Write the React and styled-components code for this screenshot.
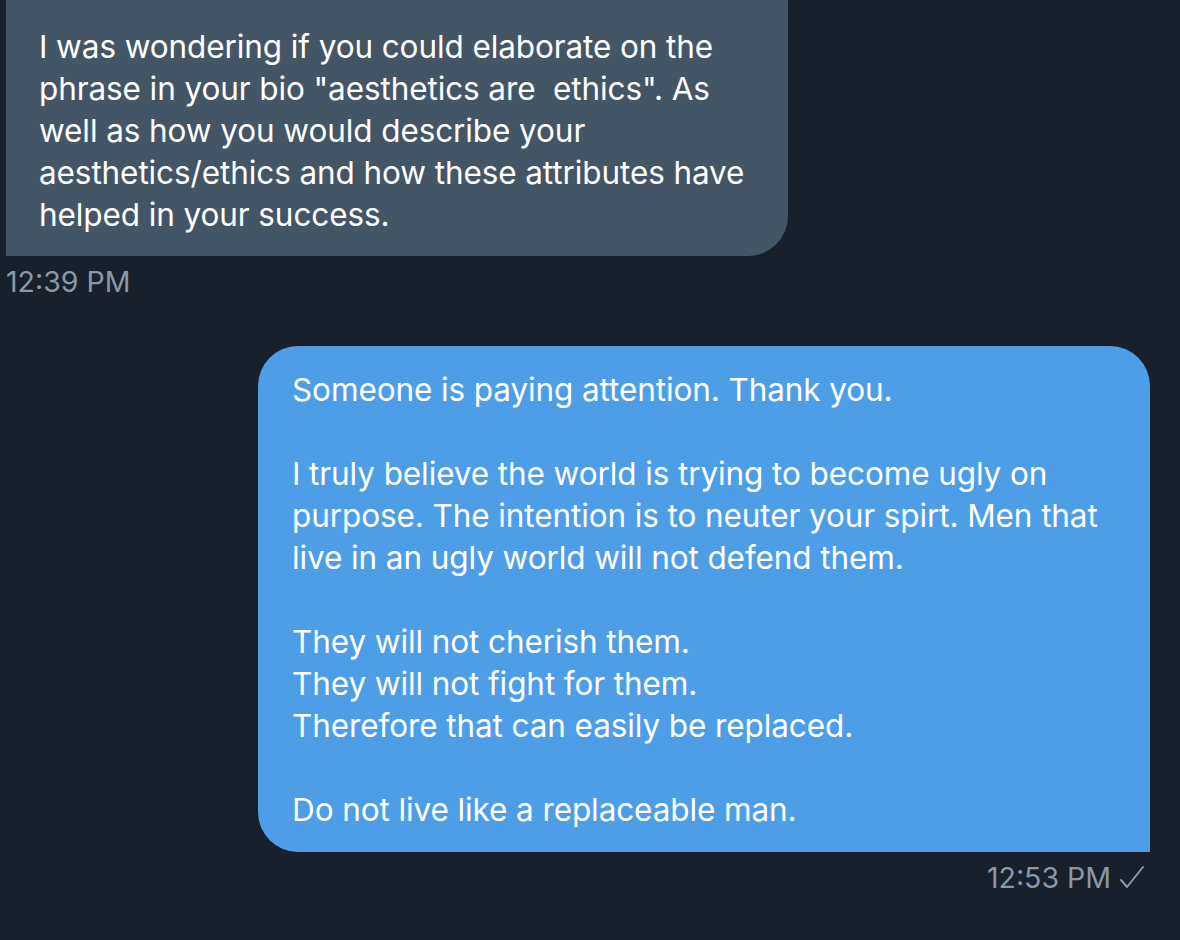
import React from "react";
import styled, { createGlobalStyle } from "styled-components";

const Global = createGlobalStyle`
  html, body { margin: 0; padding: 0; background: #18202b; }
  body { font-family: Inter, "Liberation Sans", Arial, sans-serif; -webkit-font-smoothing: antialiased; }
`;

const Page = styled.div`
  width: 1180px;
  height: 940px;
  overflow: hidden;
  background: #18202b;
  padding: 0 30px 0 6px;
  box-sizing: border-box;
  display: flex;
  flex-direction: column;
`;

const Row = styled.div`
  display: flex;
  flex-direction: column;
  align-items: ${(p) => (p.$out ? "flex-end" : "flex-start")};
  margin-top: ${(p) => p.$mt}px;
`;

const Bubble = styled.div`
  box-sizing: border-box;
  width: ${(p) => p.$w}px;
  padding: ${(p) => p.$pad};
  background: ${(p) => (p.$out ? "#4d9ee7" : "#445566")};
  color: #ffffff;
  font-size: 31.5px;
  line-height: 42px;
  letter-spacing: -0.1px;
  white-space: pre;
  border-radius: ${(p) => (p.$out ? "40px 40px 0 40px" : "40px 40px 40px 0")};
`;

const Meta = styled.div`
  display: flex;
  align-items: center;
  gap: 8px;
  margin-top: ${(p) => p.$mt}px;
  font-size: 28.5px;
  line-height: 34px;
  color: #8b98a5;
  ${(p) => (p.$out ? "margin-right: 5px;" : "margin-left: 0;")}
`;

const Check = () => (
  <svg width="26" height="26" viewBox="0 0 26 26" fill="none" stroke="#8b98a5" strokeWidth="2" strokeLinecap="round" strokeLinejoin="round">
    <path d="M2 15l6 7L24 2" />
  </svg>
);

const inText = `I was wondering if you could elaborate on the
phrase in your bio "aesthetics are  ethics". As
well as how you would describe your
aesthetics/ethics and how these attributes have
helped in your success.`;

const outText = `Someone is paying attention. Thank you.

I truly believe the world is trying to become ugly on
purpose. The intention is to neuter your spirt. Men that
live in an ugly world will not defend them.

They will not cherish them.
They will not fight for them.
Therefore that can easily be replaced.

Do not live like a replaceable man.`;

export default function App() {
  return (
    <>
      <Global />
      <Page>
        <Row $mt={-100}>
          <Bubble $w={782} $pad="126px 20px 20px 33px">{inText}</Bubble>
          <Meta $mt={9}>12:39 PM</Meta>
        </Row>
        <Row $out $mt={47}>
          <Bubble $out $w={892} $pad="23px 20px 21px 34px">{outText}</Bubble>
          <Meta $out $mt={9}>
            12:53 PM <Check />
          </Meta>
        </Row>
      </Page>
    </>
  );
}
